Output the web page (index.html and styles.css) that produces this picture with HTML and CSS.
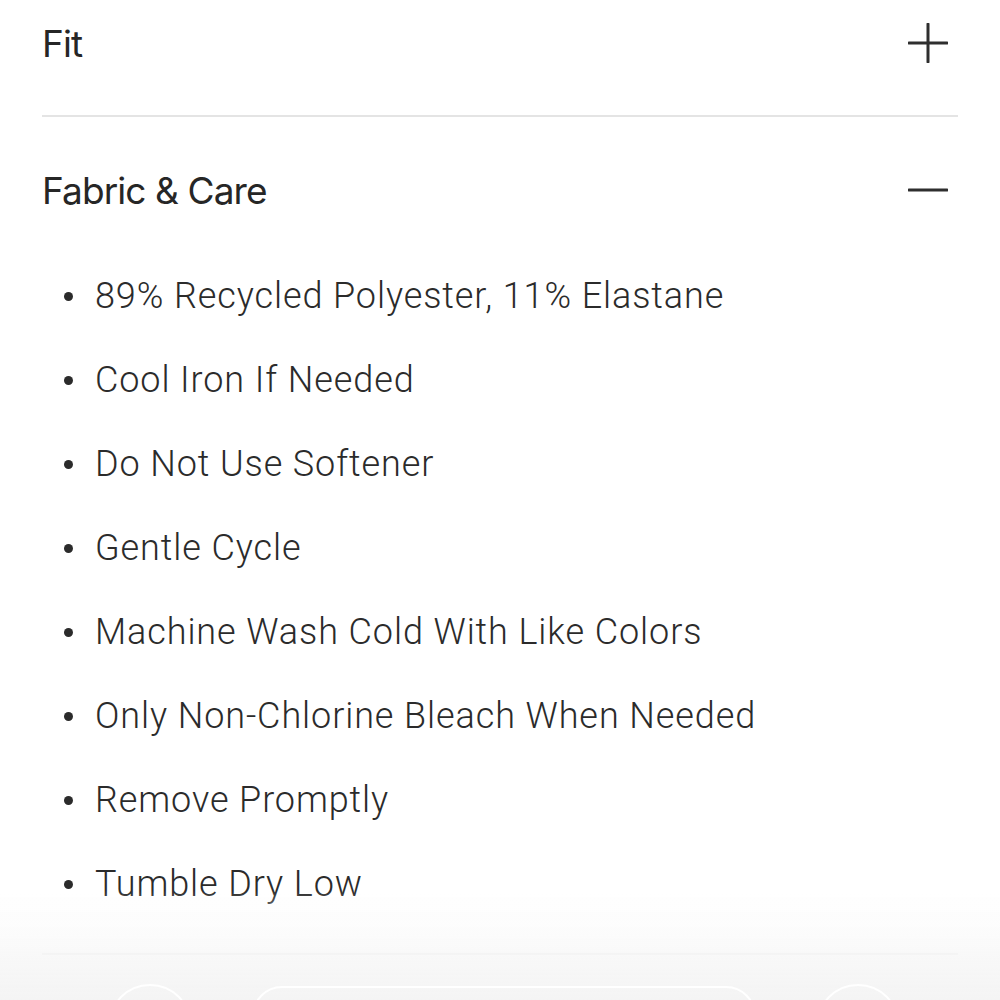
FILE: index.html
```html
<!DOCTYPE html>
<html lang="en">
<head>
<meta charset="utf-8">
<title>Fabric &amp; Care</title>
<link rel="stylesheet" href="styles.css">
</head>
<body>
<main class="accordion">
  <section class="acc-item">
    <div class="acc-head">
      <h2 class="acc-title">Fit</h2>
      <svg class="acc-icon" viewBox="0 0 40 40" aria-hidden="true"><path d="M1 20H39M20 1V39"/></svg>
    </div>
  </section>
  <section class="acc-item open">
    <div class="acc-head">
      <h2 class="acc-title">Fabric &amp; Care</h2>
      <svg class="acc-icon" viewBox="0 0 40 40" aria-hidden="true"><path d="M1 20H39"/></svg>
    </div>
    <ul class="care-list">
      <li>89% Recycled Polyester, 11% Elastane</li>
      <li>Cool Iron If Needed</li>
      <li>Do Not Use Softener</li>
      <li>Gentle Cycle</li>
      <li>Machine Wash Cold With Like Colors</li>
      <li>Only Non-Chlorine Bleach When Needed</li>
      <li>Remove Promptly</li>
      <li>Tumble Dry Low</li>
    </ul>
  </section>
</main>
<div class="toolbar">
  <span class="tb-circle"></span>
  <span class="tb-pill"></span>
  <span class="tb-circle"></span>
</div>
</body>
</html>
```
FILE: styles.css
```css
html, body {
  margin: 0;
  padding: 0;
  background: #ffffff;
}
body {
  font-family: Inter, "Helvetica Neue", "Liberation Sans", sans-serif;
  color: #2a2a2a;
  overflow: hidden;
  height: 1000px;
}
.accordion {
  margin: -30px 42px 0;
}
.acc-item {
  border-bottom: 2px solid #e4e4e4;
}
.acc-head {
  height: 86px;
  padding-top: 30px;
  display: flex;
  align-items: center;
  justify-content: space-between;
}
.acc-item:first-child .acc-head {
  padding-bottom: 29px;
}
.acc-title {
  margin: 0;
  font-size: 37px;
  font-weight: 400;
  letter-spacing: -0.9px;
  color: #262626;
}
.acc-icon {
  width: 40px;
  height: 40px;
  margin-right: 10px;
  stroke: #2e2e2e;
  stroke-width: 3;
  stroke-linecap: round;
  fill: none;
}
.care-list {
  list-style: none;
  margin: 0;
  padding: 21px 0 27px;
}
.care-list li {
  height: 84px;
  display: flex;
  align-items: center;
  font-family: Roboto, Inter, "Liberation Sans", sans-serif;
  font-size: 36px;
  font-weight: 300;
  letter-spacing: 0.9px;
  color: #2b2b2b;
}
.care-list li::before {
  content: "";
  width: 9px;
  height: 9px;
  border-radius: 50%;
  background: #2b2b2b;
  margin: 0 22px 0 22px;
  flex: none;
}
.toolbar {
  position: fixed;
  left: 0;
  right: 0;
  bottom: 0;
  height: 110px;
  background: linear-gradient(to bottom, rgba(255,255,255,0) 0%, rgba(250,250,250,0.7) 40%, rgba(246,246,246,0.9) 70%, #f4f4f4 100%);
  display: flex;
  align-items: flex-start;
  padding-top: 94px;
  box-sizing: border-box;
}
.tb-circle {
  width: 80px;
  height: 80px;
  border-radius: 50%;
  border: 2px solid #ffffff;
  flex: none;
}
.tb-circle:first-child {
  margin-left: 108px;
}
.tb-pill {
  width: 500px;
  height: 80px;
  border-radius: 30px;
  border: 2px solid #ffffff;
  margin: 2px 60px 0 60px;
  flex: none;
}
```
